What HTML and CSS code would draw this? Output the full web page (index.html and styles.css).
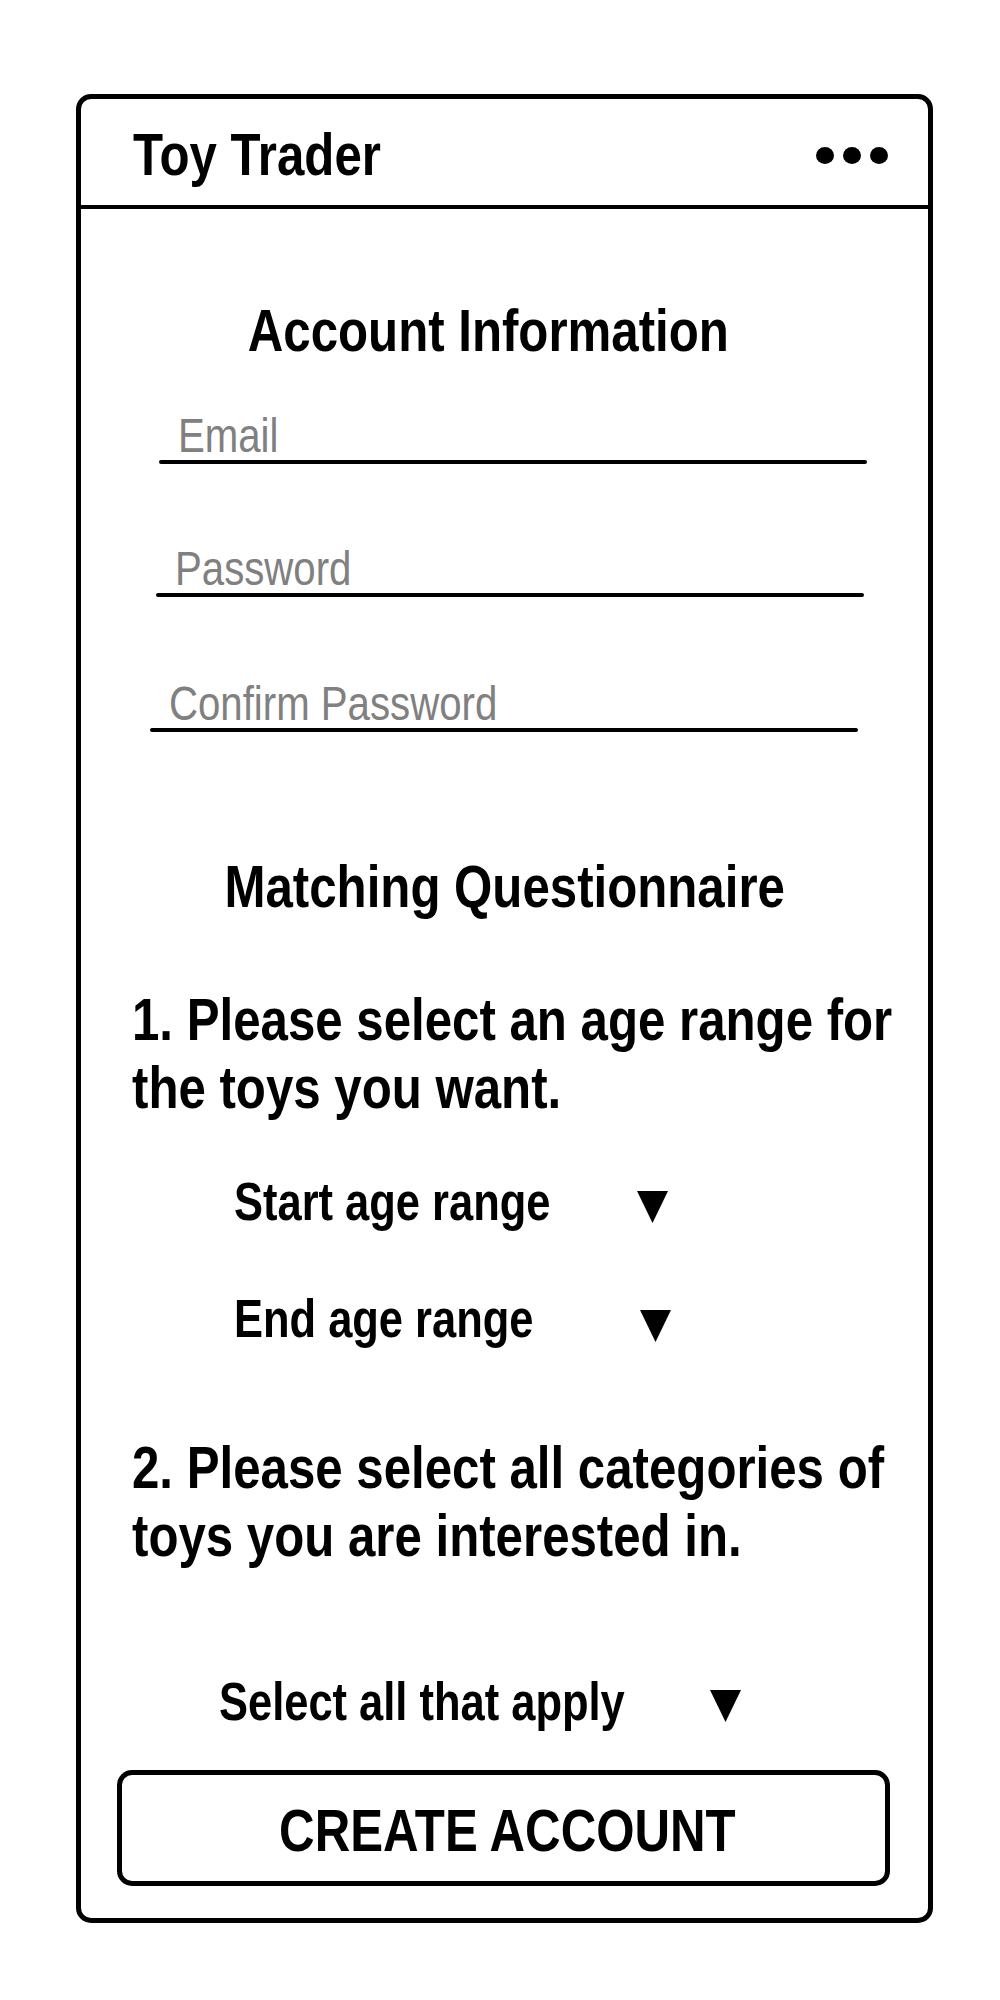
FILE: index.html
```html
<!DOCTYPE html>
<html lang="en">
<head>
    <meta charset="UTF-8">
    <meta name="viewport" content="width=device-width, initial-scale=1.0">
    <title>Toy Trader - Create Account</title>
    <link rel="stylesheet" href="styles.css">
</head>
<body>
    <div class="phone">
        <div class="app-bar">
            <div class="app-title"><span class="narrow">Toy Trader</span></div>
            <div class="menu-dots">
                <span class="dot"></span>
                <span class="dot"></span>
                <span class="dot"></span>
            </div>
        </div>

        <div class="content">
            <div class="section-title section-title--account"><span class="narrow narrow--center">Account Information</span></div>

            <div class="field field--email">
                <div class="field-label"><span class="narrow">Email</span></div>
                <div class="underline"></div>
            </div>
            <div class="field field--password">
                <div class="field-label"><span class="narrow">Password</span></div>
                <div class="underline"></div>
            </div>
            <div class="field field--confirm">
                <div class="field-label"><span class="narrow">Confirm Password</span></div>
                <div class="underline"></div>
            </div>

            <div class="section-title section-title--quiz"><span class="narrow narrow--center">Matching Questionnaire</span></div>

            <div class="question question--first">
                <span class="question-text">1. Please select an age range for the toys you want.</span>
            </div>

            <div class="dropdown dropdown--start">
                <span class="dropdown-label"><span class="narrow">Start age range</span></span>
                <svg class="arrow" width="31" height="32" viewBox="0 0 31 32"><polygon points="0,0 31,0 15.5,32" fill="#000"/></svg>
            </div>
            <div class="dropdown dropdown--end">
                <span class="dropdown-label"><span class="narrow">End age range</span></span>
                <svg class="arrow" width="31" height="32" viewBox="0 0 31 32"><polygon points="0,0 31,0 15.5,32" fill="#000"/></svg>
            </div>

            <div class="question question--second">
                <span class="question-text">2. Please select all categories of toys you are interested in.</span>
            </div>

            <div class="dropdown dropdown--all">
                <span class="dropdown-label"><span class="narrow">Select all that apply</span></span>
                <svg class="arrow" width="31" height="32" viewBox="0 0 31 32"><polygon points="0,0 31,0 15.5,32" fill="#000"/></svg>
            </div>

            <button class="create-button"><span class="narrow narrow--center">CREATE ACCOUNT</span></button>
        </div>
    </div>
</body>
</html>
```

FILE: styles.css
```css
body {
    margin: 0;
    padding: 94px 0 0 76px;
    background-color: #fff;
    color: #000;
    font-family: "Liberation Sans", Arial, sans-serif;
}

/* the mockup uses a condensed face, so squeeze regular Arial metrics */
.narrow {
    display: inline-block;
    white-space: nowrap;
    transform: scaleX(0.82);
    transform-origin: left center;
}

.narrow--center {
    transform-origin: center center;
}

.phone {
    box-sizing: border-box;
    width: 857px;
    height: 1829px;
    border: 5px solid #000;
    border-radius: 15px;
    background-color: #fff;
}

.app-bar {
    display: flex;
    align-items: center;
    justify-content: space-between;
    height: 100px;
    padding: 6px 40px 0 52px;
    border-bottom: 4px solid #000;
}

.app-title {
    font-size: 60px;
    line-height: 68px;
    font-weight: bold;
}

.menu-dots {
    display: flex;
    gap: 9px;
}

.dot {
    width: 18px;
    height: 17px;
    border-radius: 50%;
    background-color: #000;
}

.content {
    display: flex;
    flex-direction: column;
    align-items: flex-start;
}

.section-title {
    align-self: stretch;
    text-align: center;
    font-size: 60px;
    line-height: 68px;
    font-weight: bold;
}

.section-title--account {
    margin-top: 88px;
    padding-right: 32px;
}

.section-title--quiz {
    margin-top: 121px;
}

/* text inputs drawn as a label sitting on a line */
.field {
    width: 708px;
}

.field--email {
    margin: 46px 0 0 78px;
}

.field--password {
    margin: 80px 0 0 75px;
}

.field--confirm {
    margin: 82px 0 0 69px;
}

.field-label {
    padding-left: 19px;
    font-size: 49px;
    line-height: 48px;
    color: #808080;
}

.underline {
    height: 4px;
    margin-top: 1px;
    border-radius: 2px;
    background-color: #000;
}

.question {
    box-sizing: border-box;
    width: 829px;
    padding-left: 51px;
    overflow: hidden;
    font-size: 60px;
    line-height: 68px;
    font-weight: bold;
}

.question-text {
    display: block;
    width: 949px;
    transform: scaleX(0.82);
    transform-origin: left top;
}

.question--first {
    margin-top: 65px;
}

.question--second {
    margin-top: 85px;
}

.dropdown {
    display: flex;
    align-items: flex-start;
    font-size: 53px;
    line-height: 60px;
    font-weight: bold;
}

.dropdown-label {
    flex-shrink: 0;
}

.dropdown--start {
    margin: 50px 0 0 153px;
}

.dropdown--start .dropdown-label {
    width: 403px;
}

.dropdown--start .arrow {
    margin-top: 19px;
}

.dropdown--end {
    margin: 57px 0 0 153px;
}

.dropdown--end .dropdown-label {
    width: 406px;
}

.dropdown--end .arrow {
    margin-top: 21px;
}

.dropdown--all {
    margin: 102px 0 0 138px;
}

.dropdown--all .dropdown-label {
    width: 491px;
}

.dropdown--all .arrow {
    margin-top: 18px;
}

.create-button {
    box-sizing: border-box;
    width: 773px;
    height: 116px;
    margin: 38px 0 0 36px;
    padding: 6px 0 0 8px;
    border: 5px solid #000;
    border-radius: 15px;
    background-color: #fff;
    color: #000;
    font-family: inherit;
    font-size: 60px;
    line-height: 68px;
    font-weight: bold;
}
```
